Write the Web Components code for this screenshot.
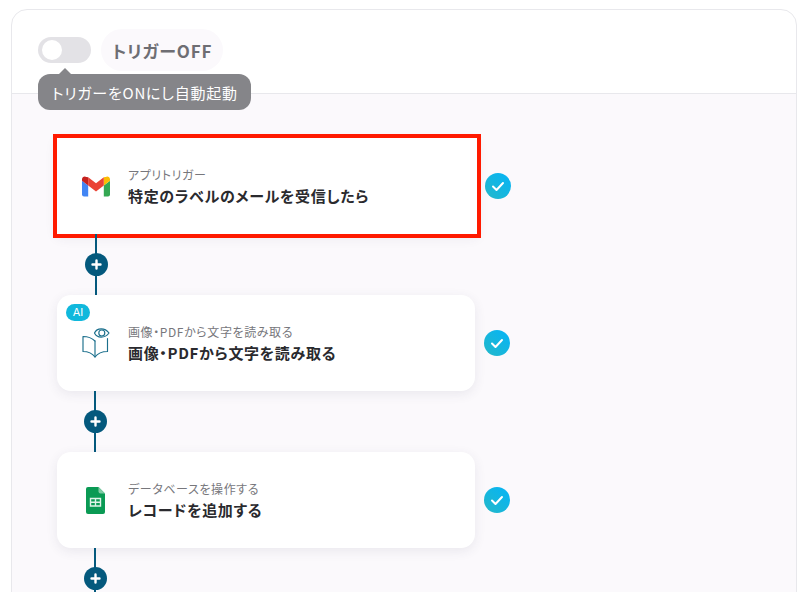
<!DOCTYPE html>
<html lang="ja"><head><meta charset="utf-8"><title>Flow</title>
<style>
html,body{margin:0;height:592px;overflow:hidden;background:#fff;font-family:"Noto Sans CJK JP","Noto Sans",sans-serif;font-feature-settings:"palt"}
</style></head><body>
<flow-panel>
  <trigger-toggle slot="header" label="トリガーOFF" tip="トリガーをONにし自動起動"></trigger-toggle>
  <flow-step selected kind="アプリトリガー" title="特定のラベルのメールを受信したら"><svg slot="icon" width="28" height="21" viewBox="0 0 28 21"><path d="M2 20.500H6.200V9.500L0 4.800V18.500a2 2 0 0 0 2 2z" fill="#4285f4"/><path d="M21.800 20.500H26a2 2 0 0 0 2-2V4.800L21.800 9.500z" fill="#34a853"/><path d="M21.800 1.300V9.500L28 4.800V3.200C28 .9 25.400-.4 23.600 1z" fill="#fbbc04"/><path d="M6.200 9.500V1.300L14 7.200l7.800-5.900V9.500L14 15.400z" fill="#ea4335"/><path d="M0 3.200V4.800L6.200 9.500V1.300L4.400 1C2.600-.4 0 .9 0 3.200z" fill="#c5221f"/></svg></flow-step>
  <flow-connector first></flow-connector>
  <flow-step ai kind="画像・PDFから文字を読み取る" title="画像・PDFから文字を読み取る"><svg slot="icon" width="28" height="30" viewBox="0 0 28 30" fill="none" stroke="#1b6f8c" stroke-width="1.150" stroke-linejoin="round" stroke-linecap="round"><path d="M13 13C10 10 5 8.500 1 8.500V23.500C5 23.500 10 25 13 29C16 25 21 23.500 25.500 23.500V10.500"/><path d="M13 13V29"/><path d="M12.500 5C15 -.5 23 -.5 27 5C23 10.500 15 10.500 12.500 5z"/><circle cx="19.800" cy="5" r="3"/></svg></flow-step>
  <flow-connector></flow-connector>
  <flow-step kind="データベースを操作する" title="レコードを追加する"><svg slot="icon" width="19" height="27" viewBox="0 0 19 27"><path d="M2 0H12.500L19 6.500V25a2 2 0 0 1-2 2H2a2 2 0 0 1-2-2V2a2 2 0 0 1 2-2z" fill="#0a9a54"/><path d="M12.500 0L19 6.500H14.500a2 2 0 0 1-2-2z" fill="#7fcba4"/><path d="M4.500 11.500H14.500V19H4.500zM4.500 15.250H14.500M9.500 11.500V19" fill="none" stroke="#dff3e8" stroke-width="1.400"/></svg></flow-step>
  <flow-connector></flow-connector>
</flow-panel>
<script>
function def(name, css, html){
  customElements.define(name, class extends HTMLElement{
    connectedCallback(){
      if(this.shadowRoot) return;
      const r=this.attachShadow({mode:'open'});
      const v=k=>this.getAttribute(k)||'';
      r.innerHTML='<style>'+css+'</style>'+html(v);
    }
  });
}
def('flow-panel',`
  :host{display:block;box-sizing:border-box;margin:9px 11px 0;width:786px;height:640px;border:1px solid #e8e8ec;border-radius:16px 16px 0 0;overflow:hidden;background:#fff}
  header{height:84px;box-sizing:border-box;border-bottom:1px solid #e8e8ec;padding:19px 0 0 26px}
  main{background:#fbf9fc;height:100%;padding:44px 0 0 45px;box-sizing:border-box;display:flex;flex-direction:column;align-items:flex-start}
`,()=>`<header><slot name="header"></slot></header><main><slot></slot></main>`);
def('trigger-toggle',`
  :host{display:flex;align-items:center;gap:10px;position:relative;width:max-content}
  .sw{width:53px;height:26px;border-radius:13px;background:#e3e2e6;position:relative}
  .sw i{position:absolute;left:4px;top:3px;width:20px;height:20px;border-radius:50%;background:#fff}
  .lab{height:42px;width:122px;box-sizing:border-box;padding:0 11px;display:flex;align-items:center;border-radius:21px;background:#fbf9fc;color:#6e6e73;font-size:17px;font-weight:700;letter-spacing:.05em;line-height:1;white-space:nowrap}
  .tip{position:absolute;left:0;top:45px;height:36px;padding:0 13px 0 14px;display:flex;align-items:center;border-radius:12px;background:#858589;color:#fff;font-size:15px;font-weight:400;letter-spacing:.05em;white-space:nowrap}
  .tip::before{content:"";position:absolute;left:21px;top:-6px;border:6px solid transparent;border-top:0;border-bottom-color:#858589;}
`,v=>`<div class="sw"><i></i></div><div class="lab">${v('label')}</div><div class="tip">${v('tip')}</div>`);
def('flow-step',`
  :host{display:flex;align-items:center;gap:9px;flex:none}
  :host([selected]){gap:8px}
  .card{position:relative;box-sizing:border-box;width:418px;height:96px;background:#fff;border-radius:14px;box-shadow:0 3px 12px rgba(60,50,90,.09);display:flex;align-items:center}
  :host([selected]) .card{width:420px;outline:4px solid #ff1a00;border-radius:0}
  .ic{width:71px;height:60px;flex:none;display:flex;align-items:center;justify-content:center;padding-left:6px;box-sizing:border-box}
  .tx{display:flex;flex-direction:column;gap:1px}
  .k{font-size:12px;letter-spacing:.05em;line-height:17px;color:#77777c;white-space:nowrap}
  .t{font-size:15px;letter-spacing:.045em;line-height:22px;font-weight:700;color:#2a2a2e;white-space:nowrap;margin:1px 0 -1px}
  .ai{display:none;position:absolute;left:9px;top:9px;width:24px;height:17px;border-radius:9px;background:#10b8dc;color:#fff;font:400 11px/17px Inter,"Noto Sans",sans-serif;text-align:center}
  :host([ai]) .ai{display:block}
  .chk{width:26px;height:26px;flex:none}
`,v=>`<div class="card"><span class="ai">AI</span><div class="ic"><slot name="icon"></slot></div><div class="tx"><span class="k">${v('kind')}</span><span class="t">${v('title')}</span></div></div>
<svg class="chk" viewBox="0 0 26 26"><defs><linearGradient id="g" x1="0" y1="1" x2="1" y2="0"><stop offset="0" stop-color="#25b8c8"/><stop offset="1" stop-color="#04b4f8"/></linearGradient></defs><circle cx="13" cy="13" r="13" fill="url(#g)"/><path d="M8 13.500L11.500 17L18 10" fill="none" stroke="#fff" stroke-width="2" stroke-linecap="round" stroke-linejoin="round"/></svg>`);
def('flow-connector',`
  :host{display:flex;flex-direction:column;align-items:center;width:24px;height:61px;margin-left:26px;flex:none;justify-content:center;position:relative}
  :host([first]){margin-left:27px}
  :host::before{content:"";position:absolute;left:11px;top:0;bottom:0;width:2px;background:#04597d}
  .b{position:relative;width:23px;height:23px;border-radius:50%;background:#04597d;display:flex;align-items:center;justify-content:center}
`,()=>`<div class="b"><svg width="11" height="11" viewBox="0 0 11 11"><path d="M5.500 1.500V9.500M1.500 5.500H9.500" stroke="#fff" stroke-width="2.400" stroke-linecap="round"/></svg></div>`);
</script>
</body></html>
